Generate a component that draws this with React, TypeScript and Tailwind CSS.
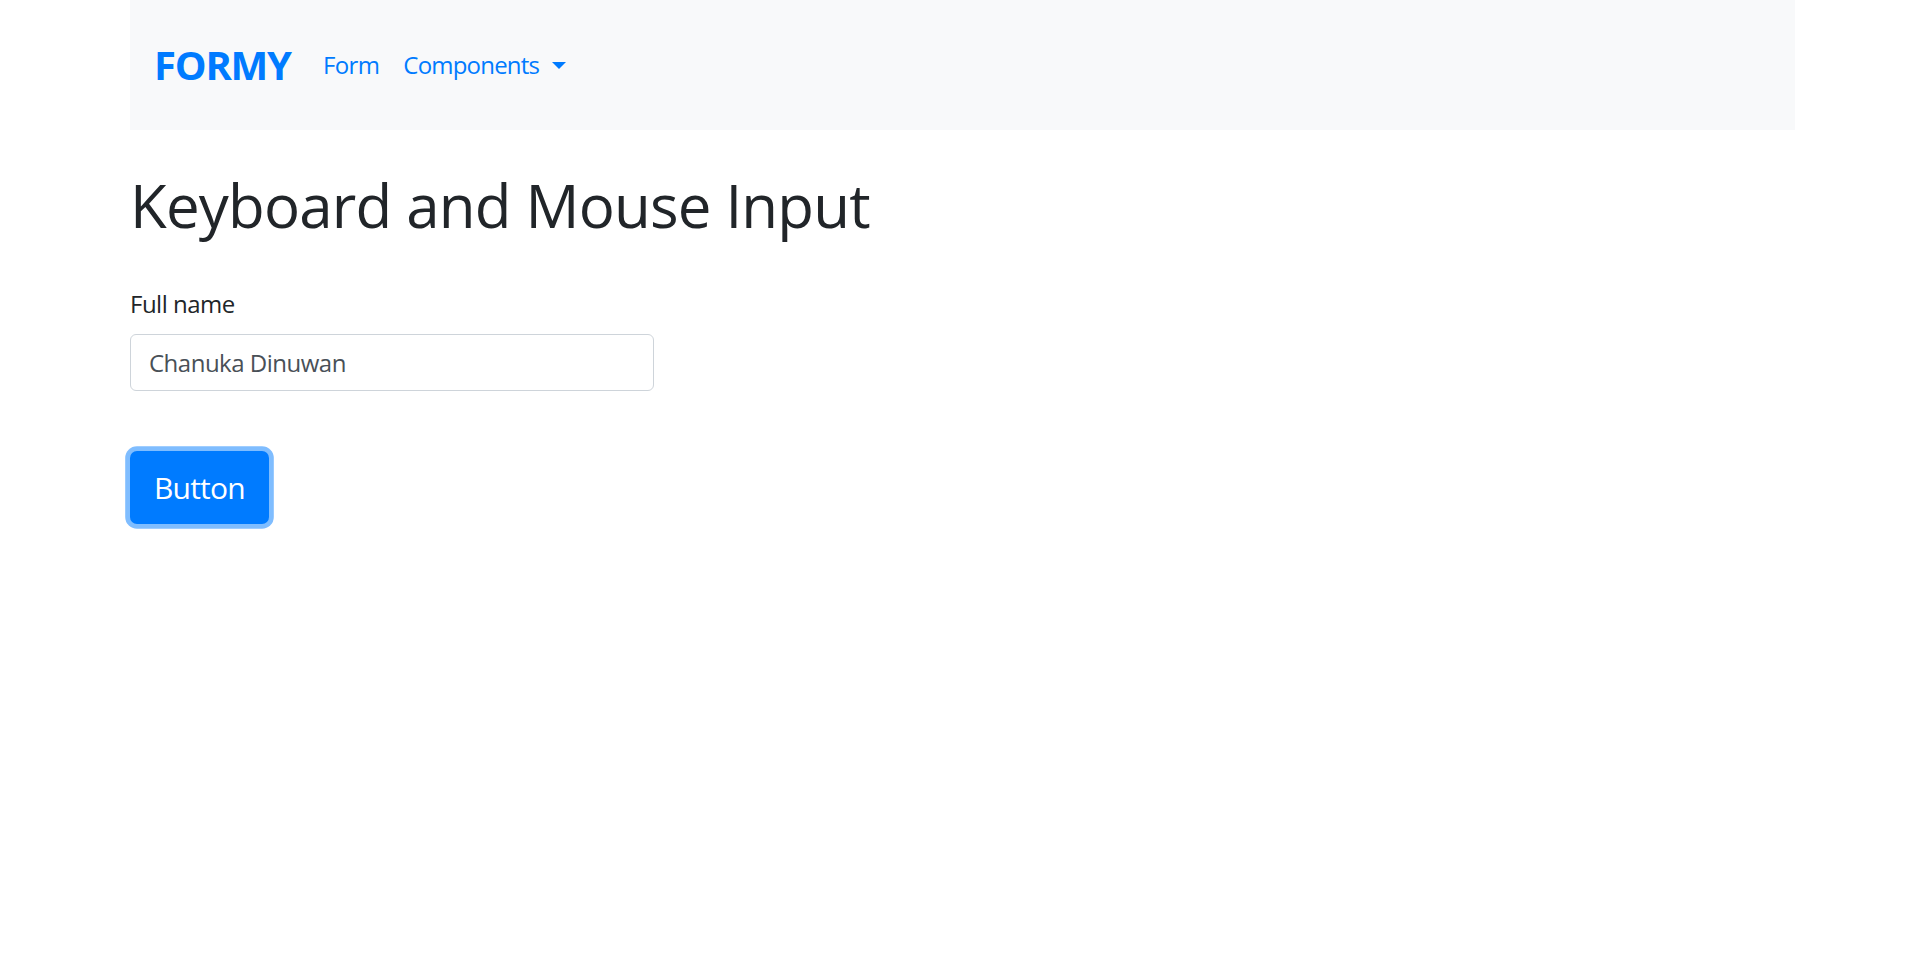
import React from "react";

export default function App() {
  return (
    <div className="min-h-[975px] bg-white" style={{ fontFamily: '"Open Sans", "Noto Sans", sans-serif' }}>
      <div className="mx-[130px]">
        <nav className="h-[130px] bg-[#f8f9fa] flex items-center px-[24px]">
          <a className="text-[40px] font-bold text-[#007bff] leading-none mr-[20px] tracking-[-1.2px]">FORMY</a>
          <a className="text-[24px] text-[#007bff] px-[12px] tracking-[-0.6px]">Form</a>
          <a className="text-[24px] text-[#007bff] px-[12px] flex items-center tracking-[-0.8px]">
            Components
            <span className="ml-[13px] mt-[1px] inline-block w-0 h-0 border-l-[7px] border-r-[7px] border-t-[7px] border-l-transparent border-r-transparent border-t-[#007bff]" />
          </a>
        </nav>
        <h1 className="mt-[39px] text-[60px] font-medium leading-[1.2] text-[#212529] tracking-[-0.8px]">Keyboard and Mouse Input</h1>
        <div className="mt-[45px]">
          <label className="block text-[24px] leading-[1.5] text-[#212529] mb-[12px] tracking-[-0.5px]">Full name</label>
          <input
            className="block w-[524px] h-[57px] border border-[#ced4da] rounded-[6px] px-[18px] text-[24px] text-[#495057] outline-none tracking-[-0.5px]"
            defaultValue="Chanuka Dinuwan"
            style={{ fontFamily: '"Open Sans", "Noto Sans", sans-serif' }}
          />
        </div>
        <button className="mt-[60px] h-[73px] px-[24px] rounded-[7px] bg-[#007bff] text-white text-[30px] leading-[1.5] tracking-[-0.8px] shadow-[0_0_0_4.8px_rgba(0,123,255,0.5)]">
          Button
        </button>
      </div>
    </div>
  );
}
